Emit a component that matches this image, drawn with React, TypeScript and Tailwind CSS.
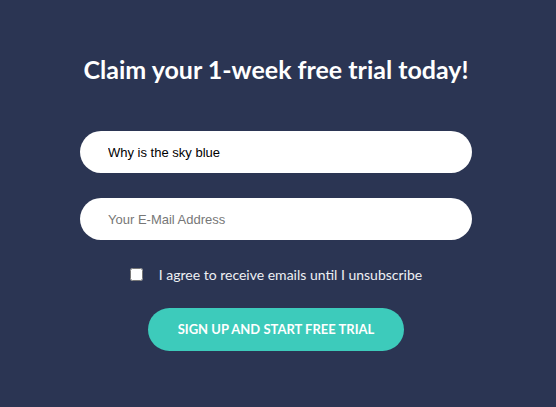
import React, { useEffect, useRef, useState } from 'react';

const App: React.FC = () => {
  const [form, setForm] = useState({
    question: 'Why is the sky blue',
    email: '',
    agree: false,
  });
  const emailRef = useRef<HTMLInputElement>(null);

  useEffect(() => {
    emailRef.current?.focus();
  }, []);

  const handleChange = (e: React.ChangeEvent<HTMLInputElement>) => {
    const { name, value, type, checked } = e.target;
    setForm({ ...form, [name]: type === 'checkbox' ? checked : value });
  };

  return (
    <div className="min-h-screen w-full bg-[#2b3553] font-['Lato','Liberation_Sans',sans-serif]">
      <form
        onSubmit={(e) => e.preventDefault()}
        className="ml-[80px] w-[392px] flex flex-col items-center pt-[54px]"
      >
        <h1 className="text-white font-bold text-[25px] leading-[30px] whitespace-nowrap">
          Claim your 1-week free trial today!
        </h1>

        <input
          type="text"
          name="question"
          value={form.question}
          onChange={handleChange}
          className="mt-[47px] w-full h-[42px] rounded-full bg-white pl-[28px] pr-4 text-[13px] text-black font-['Liberation_Sans',Arial,sans-serif] outline-none"
        />
        <input
          ref={emailRef}
          type="email"
          name="email"
          placeholder="Your E-Mail Address"
          value={form.email}
          onChange={handleChange}
          className="mt-[25px] w-full h-[42px] rounded-full bg-white pl-[28px] pr-4 text-[13px] text-black placeholder:text-[#777] font-['Liberation_Sans',Arial,sans-serif] outline-none"
        />

        <label className="mt-[24px] h-[20px] flex items-center gap-[16px] text-[14px] text-[#eef0f4]">
          <input
            type="checkbox"
            name="agree"
            checked={form.agree}
            onChange={handleChange}
            className="w-[13px] h-[13px] m-0"
          />
          I agree to receive emails until I unsubscribe
        </label>

        <button
          type="submit"
          className="mt-[24px] w-[256px] h-[43px] rounded-full bg-[#3dcbbb] text-white font-bold text-[13px] uppercase"
        >
          Sign up and start free trial
        </button>
      </form>
    </div>
  );
};

export default App;
